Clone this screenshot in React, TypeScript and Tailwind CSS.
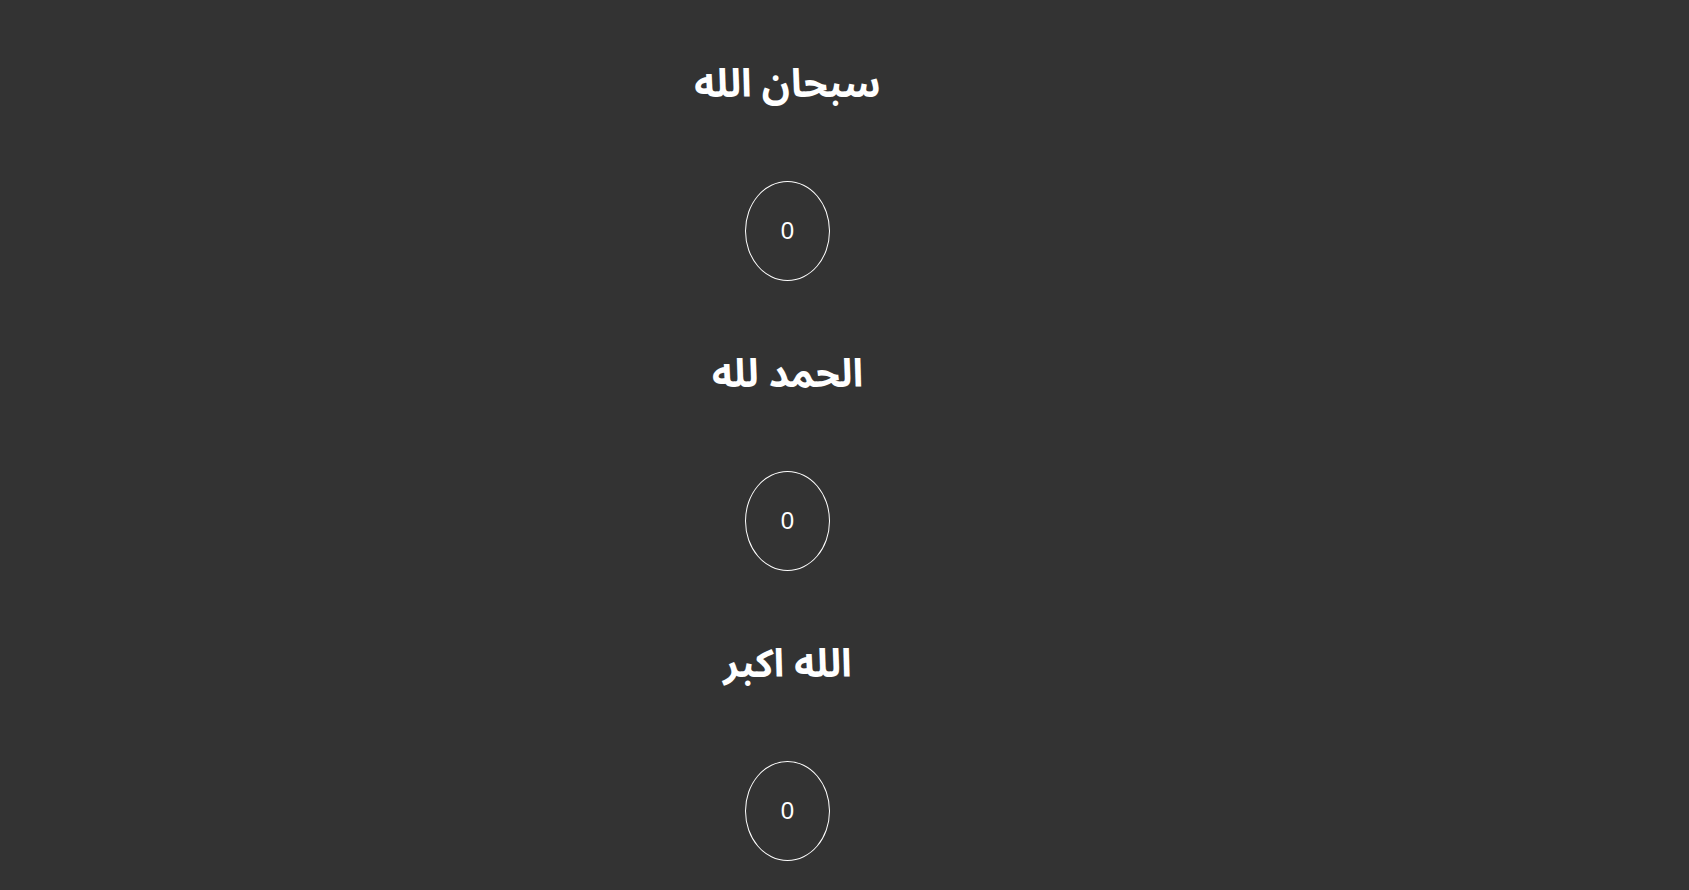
const items = [
  { title: "سبحان الله", count: 0 },
  { title: "الحمد لله", count: 0 },
  { title: "الله اكبر", count: 0 },
];

export default function App() {
  return (
    <div className="min-h-screen bg-[#333333] text-white">
      <div className="w-[1575px] flex flex-col items-center pt-[61px]">
        {items.map((item) => (
          <div key={item.title} className="flex flex-col items-center mb-[70px]">
            <h1
              dir="rtl"
              className="h-[48px] leading-[48px] text-[39px] font-bold mb-[72px] font-['Noto_Sans_Arabic','Noto_Naskh_Arabic','Noto_Sans',sans-serif]"
            >
              {item.title}
            </h1>
            <button className="w-[85px] h-[100px] rounded-[50%] border border-white flex items-center justify-center text-[24px] font-['Liberation_Sans',sans-serif]">
              {item.count}
            </button>
          </div>
        ))}
      </div>
    </div>
  );
}
